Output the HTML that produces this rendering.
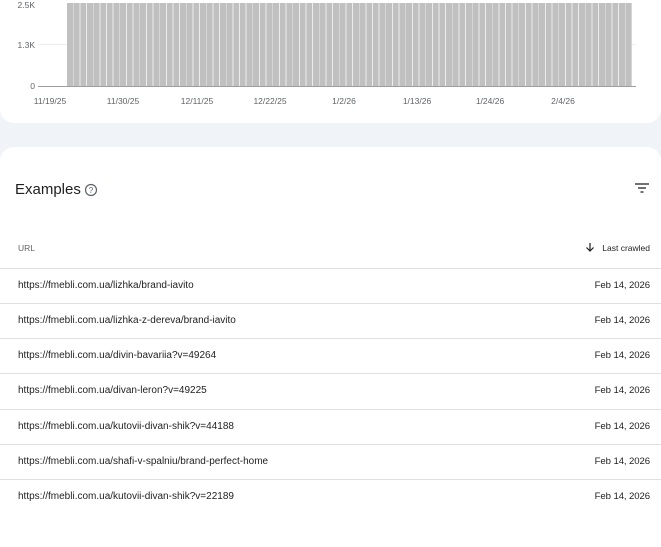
<!DOCTYPE html>
<html><head><style>
*{margin:0;padding:0;box-sizing:border-box}
body{width:661px;height:512px;overflow:hidden;background:#f0f4f9;font-family:"Liberation Sans",sans-serif;position:relative;color:#1f1f1f}
.card1{position:absolute;left:0;top:-20px;width:661px;height:143px;background:#fff;border-radius:0 0 14px 14px}
.card2{position:absolute;left:0;top:147px;width:661px;height:400px;background:#fff;border-radius:14px 14px 0 0}
.ab{position:absolute}
.yl{font-size:8.5px;color:#5f6368;text-align:right;width:30px;left:5px}
.xl{font-size:8.5px;color:#5f6368;transform:translateX(-50%)}
.bars{left:67px;top:3px;width:565px;height:83px;background:repeating-linear-gradient(90deg,#c0c0c0 0 5.8px,#ececec 5.8px 6.65px)}
.grid{height:1px;background:#eee;left:38px;width:598px}
.row{position:absolute;left:0;width:661px;height:35px;border-top:1px solid #e0e0e0;font-size:10px;color:#1f1f1f}
.row .u{position:absolute;left:18px;top:11px}
.row .d{position:absolute;right:11px;top:11px;font-size:9.6px;letter-spacing:-0.1px}
</style></head><body>
<div class="card1"></div>
<div class="ab grid" style="top:44px"></div>
<div class="ab bars"></div>
<div class="ab" style="left:38px;top:86px;width:598px;height:1px;background:#9e9e9e"></div>
<div class="ab yl" style="top:0px">2.5K</div>
<div class="ab yl" style="top:40px">1.3K</div>
<div class="ab yl" style="top:81px">0</div>
<div class="ab xl" style="left:50px;top:96px">11/19/25</div>
<div class="ab xl" style="left:123px;top:96px">11/30/25</div>
<div class="ab xl" style="left:197px;top:96px">12/11/25</div>
<div class="ab xl" style="left:270px;top:96px">12/22/25</div>
<div class="ab xl" style="left:344px;top:96px">1/2/26</div>
<div class="ab xl" style="left:417px;top:96px">1/13/26</div>
<div class="ab xl" style="left:490px;top:96px">1/24/26</div>
<div class="ab xl" style="left:563px;top:96px">2/4/26</div>
<div class="card2"></div>
<div class="ab" style="left:15px;top:181px;font-size:15px;color:#1f1f1f">Examples</div>
<svg class="ab" style="left:84px;top:183px" width="14" height="14" viewBox="0 0 14 14"><circle cx="7" cy="7" r="5.5" fill="none" stroke="#5f6368" stroke-width="1.2"/><text x="7" y="10" font-size="8" text-anchor="middle" fill="#5f6368" font-family="Liberation Sans">?</text></svg>
<svg class="ab" style="left:634px;top:182px" width="16" height="12" viewBox="0 0 16 12"><path d="M1 2h14M4 6h8M6.5 10h3" stroke="#444" stroke-width="1.4"/></svg>
<div class="ab" style="left:18px;top:243px;font-size:8.5px;color:#5f6368">URL</div>
<svg class="ab" style="left:585px;top:242px" width="10" height="11" viewBox="0 0 10 11"><path d="M5 1v8M1.5 5.5L5 9l3.5-3.5" fill="none" stroke="#1f1f1f" stroke-width="1.2"/></svg>
<div class="ab" style="right:11px;top:243px;font-size:8.5px;color:#1f1f1f">Last crawled</div>
<div class="row" style="top:268px"><span class="u">https://fmebli.com.ua/lizhka/brand-iavito</span><span class="d">Feb 14, 2026</span></div>
<div class="row" style="top:303px"><span class="u">https://fmebli.com.ua/lizhka-z-dereva/brand-iavito</span><span class="d">Feb 14, 2026</span></div>
<div class="row" style="top:338px"><span class="u">https://fmebli.com.ua/divin-bavariia?v=49264</span><span class="d">Feb 14, 2026</span></div>
<div class="row" style="top:373px"><span class="u">https://fmebli.com.ua/divan-leron?v=49225</span><span class="d">Feb 14, 2026</span></div>
<div class="row" style="top:409px"><span class="u">https://fmebli.com.ua/kutovii-divan-shik?v=44188</span><span class="d">Feb 14, 2026</span></div>
<div class="row" style="top:444px"><span class="u">https://fmebli.com.ua/shafi-v-spalniu/brand-perfect-home</span><span class="d">Feb 14, 2026</span></div>
<div class="row" style="top:479px"><span class="u">https://fmebli.com.ua/kutovii-divan-shik?v=22189</span><span class="d">Feb 14, 2026</span></div>
</body></html>
